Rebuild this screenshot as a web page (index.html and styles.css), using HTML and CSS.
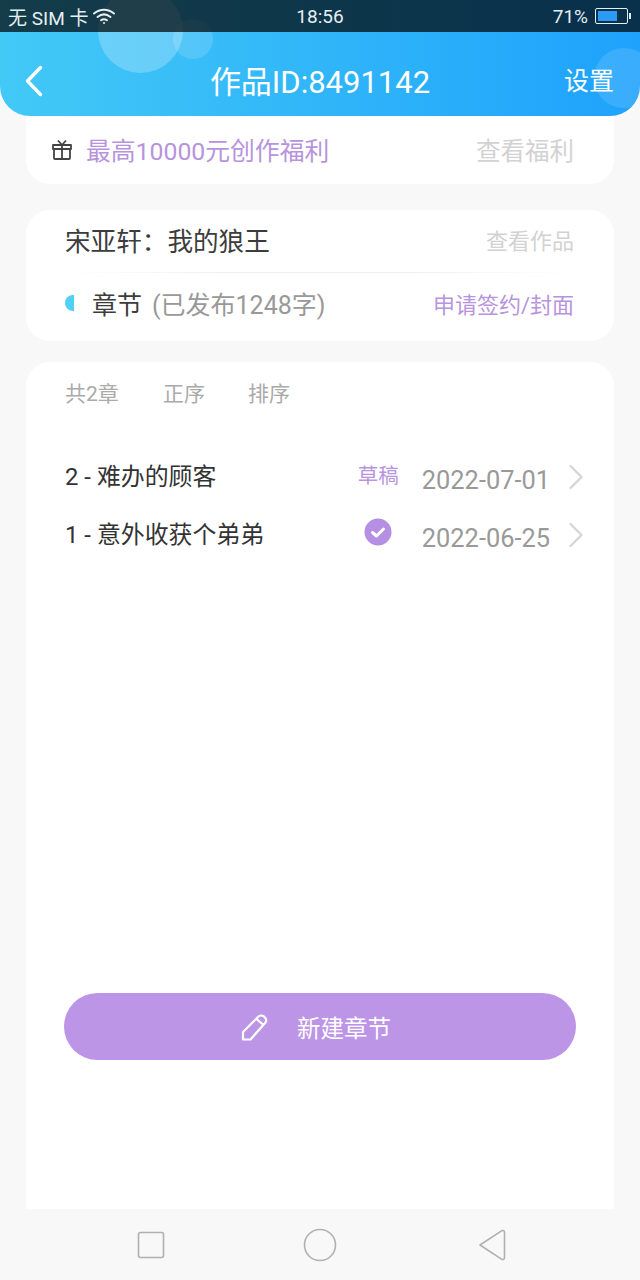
FILE: index.html
```html
<!DOCTYPE html>
<html lang="zh-CN">
<head>
  <meta charset="UTF-8" />
  <meta name="viewport" content="width=device-width, initial-scale=1.0"/>
  <title>作品ID:8491142</title>
  <link rel="stylesheet" href="styles.css">
</head>
<body>
  <div class="top">
    <div class="bubble bubble-big"></div>
    <div class="bubble bubble-small"></div>
    <div class="bubble bubble-right"></div>
    <div class="status">
      <div class="status-left">
        <span>无 SIM 卡</span>
        <svg class="wifi" width="24" height="18" viewBox="0 0 24 18" fill="none" stroke="#e6eef2" stroke-width="2" stroke-linecap="round">
          <path d="M2 6.500C8 1.500 16 1.500 22 6.500"/>
          <path d="M5.500 10C9.500 6.800 14.500 6.800 18.500 10"/>
          <path d="M9 13.200C11 11.800 13 11.800 15 13.200"/>
          <circle cx="12" cy="16" r="1" fill="#e6eef2" stroke="none"/>
        </svg>
      </div>
      <div class="status-time">18:56</div>
      <div class="status-right">
        <span>71%</span>
        <div class="battery"><div class="battery-fill"></div></div>
        <div class="battery-tip"></div>
      </div>
    </div>
    <header class="header">
      <svg class="back" width="20" height="32" viewBox="0 0 20 32" fill="none" stroke="#fff" stroke-width="3.400" stroke-linecap="round" stroke-linejoin="round">
        <path d="M16.500 2.500L3.500 16L16.500 29.500"/>
      </svg>
      <div class="title">作品ID:8491142</div>
      <div class="settings">设置</div>
    </header>
  </div>

  <main class="content">
    <section class="card card-gift">
      <svg class="gift" width="22" height="22" viewBox="0 0 22 22" fill="none" stroke="#444" stroke-width="1.800" stroke-linejoin="round">
        <rect x="2" y="6" width="18" height="4"/>
        <rect x="3" y="10" width="16" height="10" rx="1"/>
        <path d="M11 6V20M7 1.500L11 6L15 1.500"/>
      </svg>
      <div class="gift-text">最高10000元创作福利</div>
      <div class="gift-link">查看福利</div>
    </section>

    <section class="card card-book">
      <div class="book-row book-top">
        <div class="book-name">宋亚轩：我的狼王</div>
        <div class="link-gray">查看作品</div>
      </div>
      <div class="divider"></div>
      <div class="book-row book-bottom">
        <div class="half-dot"></div>
        <div class="book-chapter">章节</div>
        <div class="book-count">(已发布1248字)</div>
        <div class="book-sign">申请签约/封面</div>
      </div>
    </section>

    <section class="card card-list">
      <div class="list-tools">
        <span class="tool-count">共2章</span>
        <span class="tool-order">正序</span>
        <span>排序</span>
      </div>
      <div class="chapter">
        <div class="chapter-name">2 - 难办的顾客</div>
        <div class="chapter-draft">草稿</div>
        <div class="chapter-date">2022-07-01</div>
        <svg class="chevron" width="16" height="26" viewBox="0 0 16 26" fill="none" stroke="#d6d6d6" stroke-width="2.400" stroke-linecap="round" stroke-linejoin="round"><path d="M2.500 2L13.500 13L2.500 24"/></svg>
      </div>
      <div class="chapter">
        <div class="chapter-name">1 - 意外收获个弟弟</div>
        <svg class="chapter-check" width="28" height="28" viewBox="0 0 28 28"><circle cx="14" cy="14" r="13.500" fill="#b48fe3"/><path d="M8.500 14.500L12.500 18L19.500 11" fill="none" stroke="#fff" stroke-width="3" stroke-linecap="round" stroke-linejoin="round"/></svg>
        <div class="chapter-date">2022-06-25</div>
        <svg class="chevron" width="16" height="26" viewBox="0 0 16 26" fill="none" stroke="#d6d6d6" stroke-width="2.400" stroke-linecap="round" stroke-linejoin="round"><path d="M2.500 2L13.500 13L2.500 24"/></svg>
      </div>
      <button class="new-btn">
        <svg width="28" height="28" viewBox="0 0 28 28" fill="none" stroke="#fff" stroke-width="2.200" stroke-linejoin="round">
          <path d="M2 26.500V19L17.500 3.500Q20 1.500 23 3.500Q26.500 6.500 24.500 9.500L9.500 26.500Z"/>
          <path d="M15.500 6L22.500 12"/>
        </svg>
        <span>新建章节</span>
      </button>
    </section>
  </main>

  <nav class="nav">
    <svg width="28" height="28" viewBox="0 0 28 28" fill="none" stroke="#b0b0b0" stroke-width="1.600"><rect x="1.500" y="1.500" width="25" height="25" rx="2"/></svg>
    <svg width="34" height="34" viewBox="0 0 34 34" fill="none" stroke="#b0b0b0" stroke-width="1.600"><circle cx="17" cy="17" r="15.500"/></svg>
    <svg class="nav-back" width="28" height="32" viewBox="0 0 28 32" fill="none" stroke="#b0b0b0" stroke-width="1.600" stroke-linejoin="round"><path d="M2 16L23.500 1.800Q26.500 0.800 26.500 3.500V28.500Q26.500 31.200 23.500 30.200Z"/></svg>
  </nav>
</body>
</html>
```

FILE: styles.css
```css
* {
  box-sizing: border-box;
}
html, body {
  margin: 0;
  padding: 0;
}
body {
  width: 640px;
  height: 1280px;
  overflow: hidden;
  display: flex;
  flex-direction: column;
  background: #f8f8f8;
  font-family: Roboto, "Noto Sans CJK SC", sans-serif;
  color: #333;
}

/* top area */
.top {
  position: relative;
  height: 116px;
  flex-shrink: 0;
  overflow: hidden;
  background: linear-gradient(90deg, #43c9f6 0%, #1ea2fc 100%);
  border-radius: 0 0 30px 30px;
}
.status {
  position: relative;
  height: 32px;
  display: grid;
  grid-template-columns: 1fr auto 1fr;
  align-items: center;
  padding: 0 8px;
  background: rgba(0, 0, 0, 0.7);
  color: #e6eef2;
  font-size: 19px;
}
.status-left {
  display: flex;
  align-items: center;
  gap: 4px;
}
.status-right {
  display: flex;
  align-items: center;
  justify-content: flex-end;
  padding-right: 1px;
}
.battery {
  width: 33px;
  height: 16px;
  margin-left: 7px;
  padding: 2px;
  border: 1px solid #e6eef2;
  border-radius: 2px;
}
.battery-fill {
  width: 71%;
  height: 100%;
  background: #2d9bf5;
}
.battery-tip {
  width: 2px;
  height: 6px;
  margin-left: 1px;
  background: #e6eef2;
}
.header {
  position: relative;
  height: 84px;
  display: grid;
  grid-template-columns: 1fr auto 1fr;
  align-items: center;
  padding: 0 26px;
  color: #fff;
}
.back {
  margin-left: -2px;
  margin-top: 13px;
}
.title {
  font-size: 31px;
  margin-top: 11px;
}
.settings {
  justify-self: end;
  font-size: 25px;
  margin-top: 10px;
}
.bubble {
  position: absolute;
  border-radius: 50%;
  background: rgba(255, 255, 255, 0.24);
}
.bubble-big {
  left: 98px;
  top: -12px;
  width: 85px;
  height: 85px;
}
.bubble-small {
  left: 173px;
  top: 19px;
  width: 40px;
  height: 40px;
  background: rgba(255, 255, 255, 0.14);
}
.bubble-right {
  left: 594px;
  top: 48px;
  width: 60px;
  height: 60px;
  background: rgba(255, 255, 255, 0.12);
}

/* cards */
.content {
  flex: 1;
  display: flex;
  flex-direction: column;
  padding: 0 26px;
}
.card {
  background: #fff;
  border-radius: 24px;
}
.card-gift {
  height: 68px;
  display: flex;
  align-items: center;
  padding: 0 40px 2px 25px;
  border-radius: 0 0 24px 24px;
}
.gift {
  margin-top: 2px;
}
.gift-text {
  flex: 1;
  margin-left: 13px;
  font-size: 24.800px;
  color: #b794dd;
}
.gift-link {
  font-size: 24.500px;
  color: #d2d2d2;
}
.link-gray {
  font-size: 22px;
  color: #d2d2d2;
}
.card-book {
  height: 131px;
  margin-top: 26px;
  padding: 0 40px 0 39px;
}
.book-row {
  display: flex;
  align-items: center;
}
.book-top {
  height: 62px;
  justify-content: space-between;
  padding-bottom: 4px;
}
.book-name {
  font-size: 25.600px;
  color: #3c3c3c;
}
.divider {
  height: 1px;
  background: linear-gradient(90deg, #fff, #f0f0f0 30%, #f0f0f0 70%, #fff);
}
.book-bottom {
  height: 66px;
  padding-bottom: 7px;
}
.half-dot {
  width: 9px;
  height: 16px;
  margin-top: 1px;
  border-radius: 9px 0 0 9px;
  background: #4fd0f5;
}
.book-chapter {
  margin-left: 18px;
  font-size: 25px;
  color: #3c3c3c;
}
.book-count {
  flex: 1;
  margin-left: 10px;
  font-size: 25px;
  color: #999;
}
.book-sign {
  font-size: 22px;
  color: #b794dd;
}
.card-list {
  flex: 1;
  margin-top: 21px;
  padding: 0 30px 0 39px;
  display: flex;
  flex-direction: column;
  border-radius: 24px 24px 0 0;
}
.list-tools {
  height: 59px;
  display: flex;
  align-items: center;
  font-size: 21px;
  color: #aaa;
}
.tool-count {
  width: 98px;
}
.tool-order {
  width: 85px;
}
.chapter {
  height: 58px;
  display: flex;
  align-items: center;
}
.list-tools + .chapter {
  margin-top: 26px;
}
.chapter-name {
  flex: 1;
  font-size: 23.900px;
  color: #333;
  margin-top: -4px;
}
.chapter-draft {
  font-size: 20.500px;
  color: #b794dd;
  margin-right: 23px;
  margin-top: -4px;
}
.chapter-check {
  margin-right: 30px;
  margin-top: -4px;
}
.chapter-date {
  font-size: 25.400px;
  color: #999;
  margin-top: 8px;
}
.chevron {
  margin-left: 18px;
  margin-top: 2px;
}
.new-btn {
  width: 512px;
  height: 67px;
  margin-top: 430px;
  margin-left: -1px;
  display: flex;
  align-items: center;
  justify-content: center;
  gap: 28px;
  padding: 0 8px 0 0;
  border: none;
  border-radius: 34px;
  background: #bd95e7;
  color: #fff;
  font-family: inherit;
  font-size: 23.500px;
}

/* bottom nav */
.nav {
  height: 71px;
  flex-shrink: 0;
  display: flex;
  align-items: center;
  gap: 138px;
  padding-left: 137px;
  background: #f8f8f8;
}
.nav-back {
  margin-left: 3px;
}
```
